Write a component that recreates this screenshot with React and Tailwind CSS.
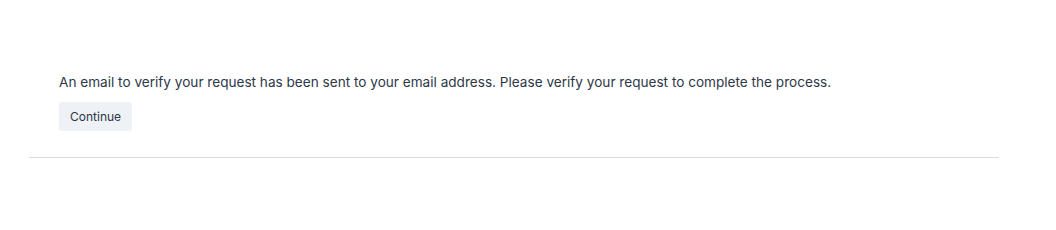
import React from 'react';

export default function App() {
  return (
    <div className="min-h-[230px] bg-white font-['Inter',sans-serif] text-[#2d3748]">
      <div className="pl-[29px] pr-[57px] pt-[72px]">
        <div className="border-b border-[#dcdcdc] px-[30px] pb-[26px]">
          <p className="text-[13.6px] leading-[20px]">
            An email to verify your request has been sent to your email address. Please verify your request to complete the process.
          </p>
          <button type="button" className="mt-[10px] h-[29px] rounded-[3px] bg-[#eef2f6] px-[11px] text-[12px] text-[#2d3748]">
            Continue
          </button>
        </div>
      </div>
    </div>
  );
}
